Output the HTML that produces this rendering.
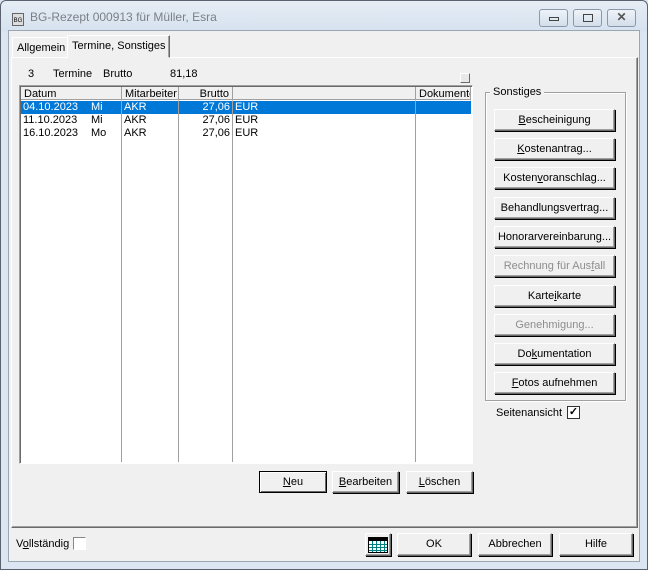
<!DOCTYPE html>
<html><head><meta charset="utf-8"><style>
*{box-sizing:border-box;margin:0;padding:0}
body{width:648px;height:570px;overflow:hidden;background:#dbe6f2;font-family:"Liberation Sans",Tahoma,sans-serif;font-size:11px;color:#000;position:relative}
.abs{position:absolute}
.win{left:0;top:0;width:648px;height:570px;border:1px solid #5a6270;border-radius:6px 6px 0 0;background:linear-gradient(#e6edf5,#d6e2ef 30px,#dbe6f2 31px)}
.client{left:8px;top:30px;width:632px;height:532px;background:#f0f0f0;border:1px solid #9aa6b4}
.btn{position:absolute;background:#f0f0f0;border:1px solid;border-color:#fff #696969 #696969 #fff;box-shadow:inset -1px -1px 0 #a0a0a0, 1px 1px 0 #000;text-align:center;line-height:21px;height:22px}
.dis{color:#8d8d8d}
.tb{position:absolute;top:9px;width:29px;height:18px;border:1px solid #8a97a8;border-radius:3px;background:linear-gradient(#eef3f9,#d3deea)}
u{text-decoration:underline}
.t{position:absolute;white-space:nowrap;line-height:14px}
.col{position:absolute;top:87px;height:375px;border-left:1px solid #a0a0a0}
.hd{position:absolute;top:87px;height:14px;background:#f0f0f0;border-right:1px solid #a0a0a0;border-bottom:1px solid #fff;box-shadow:inset 0 -1px 0 #a0a0a0;padding-left:3px;line-height:14px}
</style></head><body>
<div class="abs win"></div>
<div class="abs" style="left:12px;top:13px;width:12px;height:13px;border:1px solid #666;background:#ddd;font-size:6px;line-height:7px;padding-top:4px;text-align:center">BG</div>
<div class="t" style="left:30px;top:10px;font-size:12px;color:#7b7f86">BG-Rezept 000913 für Müller, Esra</div>
<div class="tb" style="left:539px"><div class="abs" style="left:9px;top:7px;width:10px;height:4px;border:1px solid #444"></div></div>
<div class="tb" style="left:573px"><div class="abs" style="left:9px;top:4px;width:10px;height:8px;border:1px solid #444"></div></div>
<div class="tb" style="left:607px;text-align:center;line-height:15px;font-weight:bold;color:#555;font-size:12px">✕</div>
<div class="abs client"></div>
<div class="abs" style="left:12px;top:37px;width:56px;height:20px;border:1px solid;border-color:#fff #888 transparent #fff;background:#f0f0f0"></div>
<div class="t" style="left:17px;top:41px">Allgemein</div>
<div class="abs" style="left:11px;top:57px;width:627px;height:471px;border:1px solid;border-color:#fff #696969 #696969 #fff;box-shadow:inset -1px -1px 0 #a0a0a0"></div>
<div class="abs" style="left:67px;top:35px;width:103px;height:23px;border:1px solid;border-color:#fff #696969 transparent #fff;background:#f0f0f0;box-shadow:inset -1px 0 0 #a0a0a0"></div>
<div class="t" style="left:72px;top:39px">Termine, Sonstiges</div>
<div class="t" style="left:28px;top:67px">3</div>
<div class="t" style="left:53px;top:67px">Termine</div>
<div class="t" style="left:103px;top:67px">Brutto</div>
<div class="t" style="left:170px;top:67px">81,18</div>
<div class="abs" style="left:460px;top:73px;width:10px;height:10px;border:1px solid;border-color:#fff #696969 #696969 #fff;background:#e8e8e8"></div>
<div class="abs" style="left:19px;top:85px;width:454px;height:379px;background:#fff;border:1px solid;border-color:#a0a0a0 #fff #fff #a0a0a0;box-shadow:inset 1px 1px 0 #696969"></div>
<div class="abs" style="left:21px;top:101px;width:450px;height:13px;background:#0078d7"></div>
<div class="col" style="left:121px"></div><div class="col" style="left:178px"></div><div class="col" style="left:232px"></div><div class="col" style="left:415px"></div>
<div class="hd" style="left:21px;width:101px">Datum</div>
<div class="hd" style="left:122px;width:57px">Mitarbeiter</div>
<div class="hd" style="left:179px;width:54px;text-align:right;padding-right:3px">Brutto</div>
<div class="hd" style="left:233px;width:183px"></div>
<div class="hd" style="left:416px;width:55px;overflow:hidden">Dokumente</div>
<div style="color:#fff">
<div class="t" style="left:23px;top:100px">04.10.2023</div><div class="t" style="left:91px;top:100px">Mi</div><div class="t" style="left:124px;top:100px">AKR</div><div class="t" style="left:180px;top:100px;width:50px;text-align:right">27,06</div><div class="t" style="left:235px;top:100px">EUR</div></div>
<div class="t" style="left:23px;top:113px">11.10.2023</div><div class="t" style="left:91px;top:113px">Mi</div><div class="t" style="left:124px;top:113px">AKR</div><div class="t" style="left:180px;top:113px;width:50px;text-align:right">27,06</div><div class="t" style="left:235px;top:113px">EUR</div>
<div class="t" style="left:23px;top:126px">16.10.2023</div><div class="t" style="left:91px;top:126px">Mo</div><div class="t" style="left:124px;top:126px">AKR</div><div class="t" style="left:180px;top:126px;width:50px;text-align:right">27,06</div><div class="t" style="left:235px;top:126px">EUR</div>
<div class="abs" style="left:485px;top:92px;width:141px;height:309px;border:1px solid #a0a0a0;box-shadow:1px 1px 0 #fff, inset 1px 1px 0 #fff"></div>
<div class="t" style="left:490px;top:85px;background:#f0f0f0;padding:0 3px">Sonstiges</div>
<div class="btn" style="left:494px;top:109px;width:121px"><u>B</u>escheinigung</div>
<div class="btn" style="left:494px;top:138px;width:121px"><u>K</u>ostenantrag...</div>
<div class="btn" style="left:494px;top:167px;width:121px">Kosten<u>v</u>oranschlag...</div>
<div class="btn" style="left:494px;top:197px;width:121px">Behandlungsvertrag...</div>
<div class="btn" style="left:494px;top:226px;width:121px">Honorarvereinbarung...</div>
<div class="btn dis" style="left:494px;top:255px;width:121px">Rechnung für Aus<u>f</u>all</div>
<div class="btn" style="left:494px;top:285px;width:121px">Karte<u>i</u>karte</div>
<div class="btn dis" style="left:494px;top:314px;width:121px">Genehmigung...</div>
<div class="btn" style="left:494px;top:343px;width:121px">Do<u>k</u>umentation</div>
<div class="btn" style="left:494px;top:372px;width:121px"><u>F</u>otos aufnehmen</div>
<div class="t" style="left:496px;top:406px">Seitenansicht</div>
<div class="abs" style="left:567px;top:406px;width:13px;height:13px;border:1px solid #333;background:#fff;font-size:11px;line-height:11px;text-align:center;font-weight:bold">✓</div>
<div class="btn" style="left:259px;top:471px;width:68px;border-color:#000;box-shadow:inset 1px 1px 0 #fff,inset -1px -1px 0 #696969"><u>N</u>eu</div>
<div class="btn" style="left:332px;top:471px;width:67px"><u>B</u>earbeiten</div>
<div class="btn" style="left:406px;top:471px;width:67px"><u>L</u>öschen</div>
<div class="t" style="left:16px;top:537px">V<u>o</u>llständig</div>
<div class="abs" style="left:73px;top:537px;width:13px;height:13px;border:1px solid;border-color:#888 #fff #fff #888;background:#fff"></div>
<div class="btn" style="left:365px;top:533px;width:26px;height:23px">
<svg class="abs" style="left:2px;top:3px" width="20" height="16"><rect x="0.5" y="0.5" width="19" height="15" fill="#fff" stroke="#000"/><rect x="1" y="1" width="18" height="3" fill="#000"/><g stroke="#008080"><path d="M1 7.5H19M1 10.5H19M1 13.5H19M4.5 4V15M8.5 4V15M12.5 4V15M16.5 4V15"/></g></svg></div>
<div class="btn" style="left:397px;top:533px;width:74px;height:23px">OK</div>
<div class="btn" style="left:478px;top:533px;width:74px;height:23px">Abbrechen</div>
<div class="btn" style="left:559px;top:533px;width:74px;height:23px">Hilfe</div>
</body></html>
